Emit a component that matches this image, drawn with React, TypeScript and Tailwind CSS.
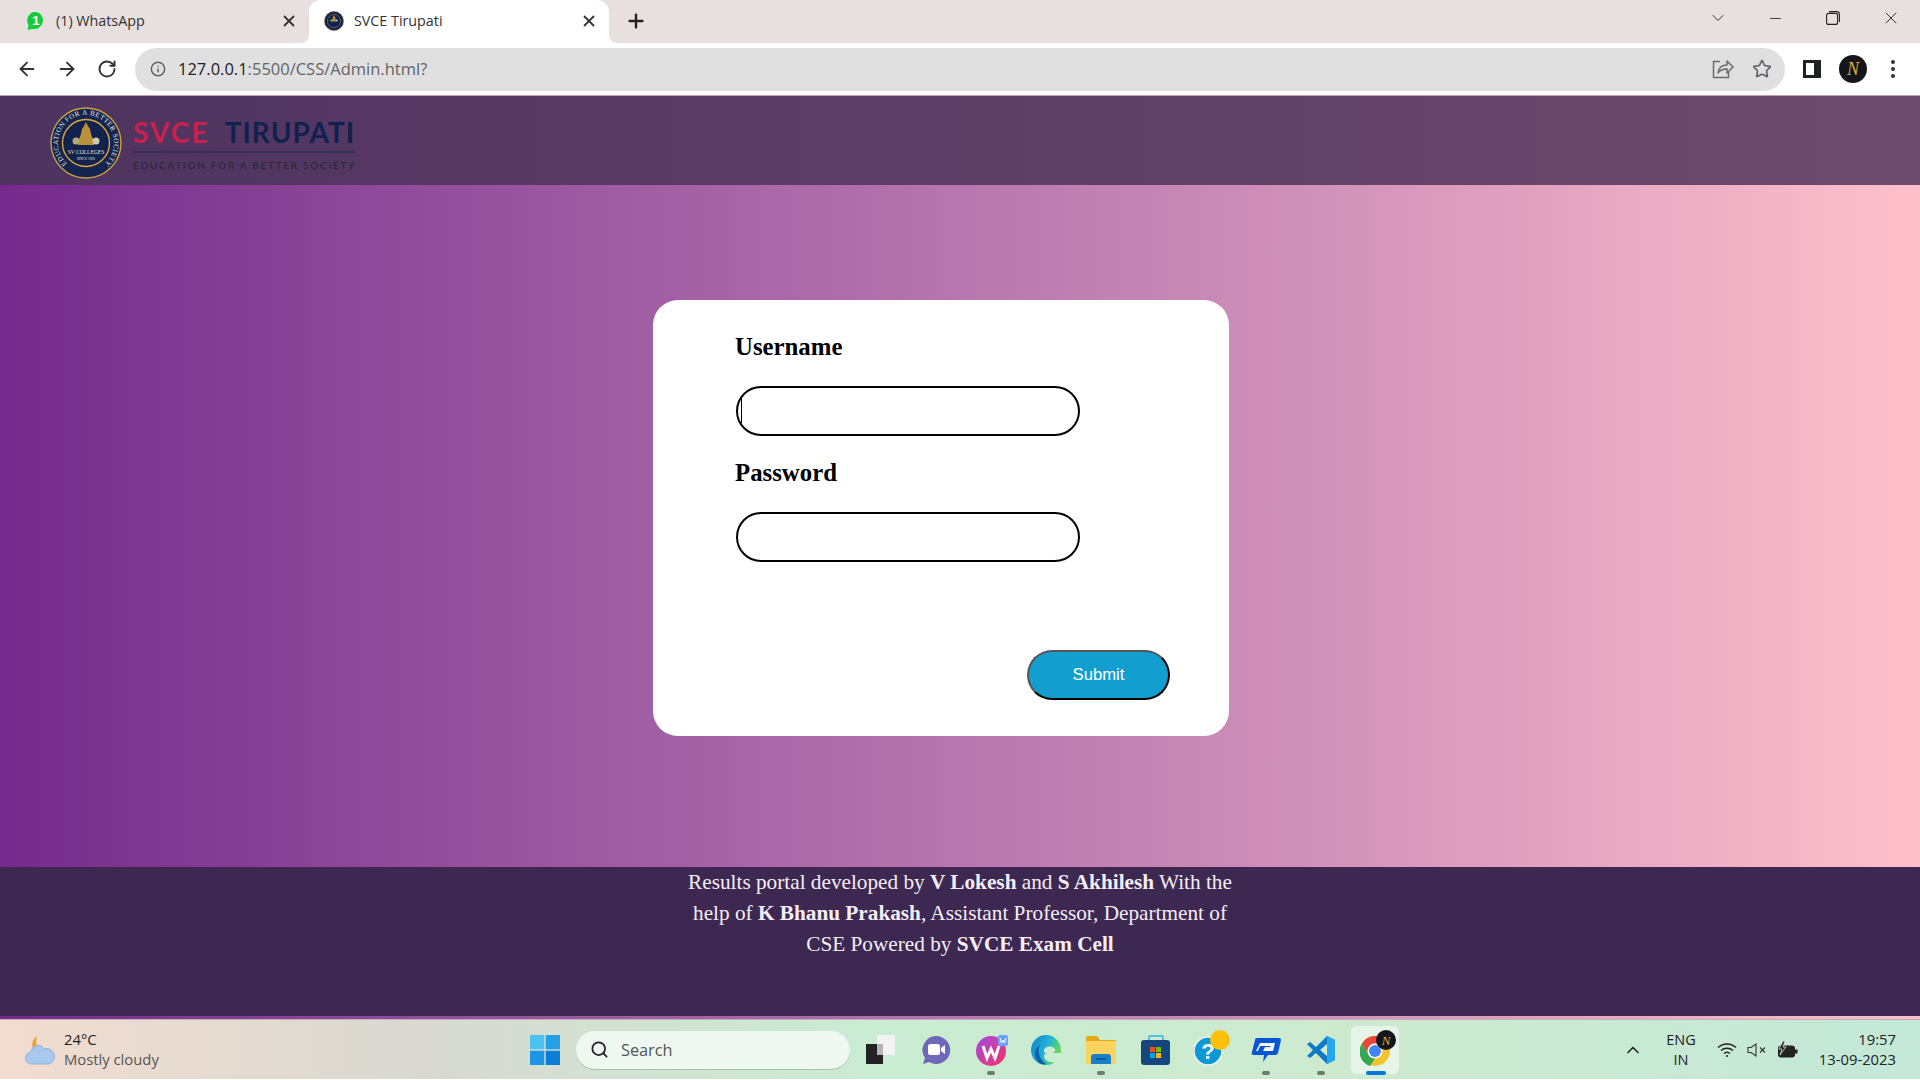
import { ArrowLeft, ArrowRight, ChevronDown, ChevronUp, Info, Minus, Plus, RotateCw, Search, Star, X } from "lucide-react";

const ui = "font-['Open_Sans',sans-serif]";

function SvceSeal({ size, plain }: { size: number; plain?: boolean }) {
  return (
    <svg width={size} height={size} viewBox="0 0 72 72">
      <defs>
        <path id="sealArc" d="M18 57.400 A28 28 0 1 1 54 57.400" />
      </defs>
      <circle cx="36" cy="36" r="35" fill="#14264f" stroke="#c9a13f" strokeWidth="1.4" />
      <circle cx="36" cy="36" r="23.5" fill="#11224d" stroke="#dba93a" strokeWidth="1.4" />
      <path d="M36 15 l2 4 2 3 1 5 2 5 1 6H28l1-6 2-5 1-5 2-3z" fill="#b8913a" />
      <circle cx="26" cy="34" r="3.5" fill="#b9a77c" />
      <circle cx="46" cy="34" r="3.5" fill="#cfc9b8" />
      {!plain && (
        <>
          <text fontSize="7" fill="#e9e7ea" fontFamily="Liberation Serif, serif" textLength="134">
            <textPath href="#sealArc" startOffset="1%">EDUCATION FOR A BETTER SOCIETY</textPath>
          </text>
          <text x="36" y="47" fontSize="5.500" textAnchor="middle" fill="#e8e4d8" fontFamily="Liberation Serif, serif">SV COLLEGES</text>
          <text x="36" y="53" fontSize="3.600" textAnchor="middle" fill="#e8e4d8" fontFamily="Liberation Serif, serif">SINCE 1981</text>
        </>
      )}
    </svg>
  );
}

function ChromeTabs() {
  return (
    <div className="flex h-[43px] items-end bg-[#e8dfdf] text-[#333]">
      <div className="flex h-[43px] w-[309px] items-center pb-[2px] pl-[26px] pr-[11px]">
        <svg width="20" height="22" viewBox="0 0 18 20">
          <path d="M9 1a8.500 8.500 0 0 0-7.300 12.800L.6 19l5-1.300A8.500 8.500 0 1 0 9 1z" fill="#18c93b" stroke="#d9efdc" />
          <text x="9" y="14" fontSize="12" fontWeight="700" textAnchor="middle" fill="#fff" fontFamily="Liberation Sans, sans-serif">1</text>
        </svg>
        <span className={`ml-[10px] text-[14.3px] ${ui}`}>(1) WhatsApp</span>
        <X className="ml-auto" size={18} strokeWidth={2.4} color="#333" />
      </div>
      <div className="relative flex h-[43px] w-[300px] items-center rounded-t-[12px] bg-white pb-[2px] pl-[15px] pr-[11px]">
        <span className="absolute bottom-0 left-[-8px] h-[8px] w-[8px] bg-white">
          <span className="block h-full w-full rounded-br-[8px] bg-[#e8dfdf]" />
        </span>
        <span className="absolute bottom-0 right-[-8px] h-[8px] w-[8px] bg-white">
          <span className="block h-full w-full rounded-bl-[8px] bg-[#e8dfdf]" />
        </span>
        <SvceSeal size={20} plain />
        <span className={`ml-[10px] text-[14.3px] ${ui}`}>SVCE Tirupati</span>
        <X className="ml-auto" size={18} strokeWidth={2.4} color="#333" />
      </div>
      <div className="flex h-[43px] flex-1 items-center pb-[2px] pl-[16px] pr-[19px]">
        <Plus size={22} strokeWidth={2.6} color="#222" />
        <ChevronDown className="ml-auto mb-[5px]" size={20} strokeWidth={1.2} color="#333" />
        <Minus className="ml-[39px] mb-[5px]" size={17} strokeWidth={1.2} color="#222" />
        <svg className="ml-[42px] mb-[5px]" width="14" height="14" viewBox="0 0 14 14" fill="none" stroke="#222" strokeWidth="1.1">
          <rect x="0.6" y="2.4" width="11" height="11" rx="2" />
          <path d="M3 .6h7.600a2.800 2.800 0 0 1 2.800 2.800V11" />
        </svg>
        <X className="ml-[41px] mb-[5px]" size={20} strokeWidth={1.1} color="#222" />
      </div>
    </div>
  );
}

function ChromeToolbar() {
  return (
    <div className="flex h-[53px] items-center border-b border-[#c9a0bb] bg-white">
      <div className="flex w-[135px] items-center pb-[1px] pl-[16px] text-[#333]">
        <ArrowLeft size={22} strokeWidth={2} />
        <ArrowRight className="ml-[18px]" size={22} strokeWidth={2} />
        <RotateCw className="ml-[19px]" size={20} strokeWidth={2.3} />
      </div>
      <div className="flex h-[43px] w-[1650px] items-center rounded-full bg-[#e0e0e0] pl-[15px] pr-[13px]">
        <Info size={16} strokeWidth={2.2} color="#5f6368" />
        <span className={`ml-[12px] text-[16.5px] text-[#626466] ${ui}`}>
          <span className="text-[#202124]">127.0.0.1</span>:5500/CSS/Admin.html?
        </span>
        <svg className="ml-auto" width="22" height="20" viewBox="0 0 22 20" fill="none" stroke="#6b6b6b" strokeWidth="1.5">
          <path d="M8 2.500H1.500v16h15V13" />
          <path d="M6 14c.5-5 4-8 9-8V2l6 6-6 6v-4c-4 0-7 1-9 4z" strokeLinejoin="round" />
        </svg>
        <Star className="ml-[18px]" size={20} strokeWidth={2} color="#5f6368" />
      </div>
      <div className="flex flex-1 items-center pl-[18px]">
        <span className="flex h-[18px] w-[18px] items-stretch bg-[#202124] py-[3px] pl-[3px] pr-[7px]">
          <span className="block w-full bg-white" />
        </span>
        <span className="ml-[18px] flex h-[28px] w-[28px] items-center justify-center rounded-full bg-[#14161a] font-['Liberation_Serif',serif] text-[18px] italic leading-none text-[#d7b13c]">
          N
        </span>
        <span className="ml-[24px] flex flex-col gap-[3px]">
          <span className="h-[4px] w-[4px] rounded-full bg-[#333]" />
          <span className="h-[4px] w-[4px] rounded-full bg-[#333]" />
          <span className="h-[4px] w-[4px] rounded-full bg-[#333]" />
        </span>
      </div>
    </div>
  );
}

function SiteHeader() {
  return (
    <header className="flex h-[89px] items-center bg-gradient-to-r from-[#4e3360] to-[#6c4b6c] pl-[50px]">
      <div className="mt-[4px] flex">
        <SvceSeal size={72} />
      </div>
      <div className="ml-[11px] mt-[6px] flex w-[222px] flex-col font-['Lato',sans-serif]">
        <div className="flex justify-between text-[28px] font-bold leading-[30px]">
          <span className="tracking-[2px] text-[#c8204f]">SVCE</span>
          <span className="tracking-[1px] text-[#10214f]">TIRUPATI</span>
        </div>
        <div className="mt-[4px] h-[2px] bg-[#33305c]" />
        <div className="mt-[6px] whitespace-nowrap text-[10px] font-bold leading-[12px] tracking-[1.7px] text-[#2f2a3a]">
          EDUCATION FOR A BETTER SOCIETY
        </div>
      </div>
    </header>
  );
}

function Field({ label, caret }: { label: string; caret?: boolean }) {
  return (
    <div className="flex flex-col">
      <label className="text-[24.8px] font-bold leading-[30px] text-black">{label}</label>
      <div className="relative ml-[1px] mt-[24px]">
        <input className="block h-[50px] w-[344px] rounded-[25px] border-2 border-black bg-white outline-none" />
        {caret && <span className="absolute left-[5px] top-[12px] h-[25px] w-[1px] bg-black" />}
      </div>
    </div>
  );
}

function LoginCard() {
  return (
    <form className="ml-[653px] flex h-[436px] w-[576px] flex-col rounded-[25px] bg-white pl-[82px] pr-[59px] pt-[32px] font-['Liberation_Serif',serif]">
      <Field label="Username" caret />
      <div className="mt-[22px]">
        <Field label="Password" />
      </div>
      <button
        type="button"
        className="mt-[88px] h-[50px] w-[143px] self-end rounded-[25px] border-2 border-t-[#555] border-l-[#555] border-r-black border-b-black bg-[#129fd0] font-['Liberation_Sans',sans-serif] text-[16.7px] text-white"
      >
        Submit
      </button>
    </form>
  );
}

function SiteFooter() {
  return (
    <footer className="flex h-[149px] justify-center bg-[#3d2852] font-['Liberation_Serif',serif] text-[21.25px] leading-[31px] text-[#f5eef5]">
      <p className="w-[560px] text-center">
        Results portal developed by <b>V Lokesh</b> and <b>S Akhilesh</b> With the help of <b>K Bhanu Prakash</b>, Assistant Professor, Department of CSE Powered by <b>SVCE Exam Cell</b>
      </p>
    </footer>
  );
}

function Slot({ children, dot, active }: { children: React.ReactNode; dot?: boolean; active?: boolean }) {
  return (
    <div className="relative flex h-[48px] w-[55px] items-center justify-center">
      {active && <span className="absolute left-[3px] top-0 h-[48px] w-[48px] rounded-[5px] bg-white/50" />}
      <span className="relative flex">{children}</span>
      {dot && <span className="absolute bottom-[-1px] left-[24px] h-[4px] w-[8px] rounded-full bg-[#6f7a6f]" />}
      {active && <span className="absolute bottom-[-1px] left-[18px] h-[4px] w-[20px] rounded-full bg-[#0078d4]" />}
    </div>
  );
}

function Taskbar() {
  return (
    <div className={`flex h-[60px] items-center border-t border-[#b9b3b3] bg-[linear-gradient(to_right,#f2dccf_0%,#d9d9d2_22%,#c9ecd2_45%,#cdeacf_70%,#c3e8d8_100%)] ${ui}`}>
      <div className="flex w-[530px] items-center pl-[25px]">
        <svg width="30" height="30" viewBox="0 0 30 30">
          <path d="M12 1c-4 3-6 7-4 13l9 1C12 13 10 8 12 1z" fill="#f0a030" />
          <path d="M7 29a6 6 0 0 1-1-12 7 7 0 0 1 13-3 6.500 6.500 0 0 1 5 15z" fill="#a9c8ee" stroke="#8fb2e0" />
        </svg>
        <div className="mb-[2px] ml-[9px] flex flex-col text-[14.8px] leading-[20px]">
          <span className="text-[#222]">24°C</span>
          <span className="text-[#555]">Mostly cloudy</span>
        </div>
      </div>
      <svg width="30" height="30" viewBox="0 0 30 30">
        <path d="M0 0h14.300v14.300H0z" fill="#4cc2f1" />
        <path d="M15.700 0H30v14.300H15.700z" fill="#22a0e8" />
        <path d="M0 15.700h14.300V30H0z" fill="#1c96e5" />
        <path d="M15.700 15.700H30V30H15.700z" fill="#0a7fd9" />
      </svg>
      <div className="ml-[16px] flex h-[38px] w-[274px] items-center rounded-full bg-[#eef7f0] pl-[14px] shadow-[0_1px_0_#aac0ae]">
        <Search size={19} strokeWidth={2.2} color="#222" />
        <span className="ml-[12px] mt-[1px] text-[16.3px] text-[#555]">Search</span>
      </div>
      <div className="ml-[3px] flex items-center">
        <Slot>
          <svg width="30" height="30" viewBox="0 0 30 30">
            <rect x="11" y="0" width="18" height="20" fill="#f3f3f3" />
            <rect x="0" y="9" width="17" height="20" fill="#222" />
            <rect x="11" y="9" width="6" height="11" fill="#b5b5b5" />
          </svg>
        </Slot>
        <Slot>
          <svg width="30" height="30" viewBox="0 0 30 30">
            <path d="M15 1a14 14 0 1 1-7 26l-6 2 2-6A14 14 0 0 1 15 1z" fill="#6d68b8" />
            <rect x="7" y="9" width="12" height="11" rx="2.500" fill="#fff" />
            <path d="M20 13l4-3v9l-4-3z" fill="#fff" />
          </svg>
        </Slot>
        <Slot dot>
          <svg className="ml-[2px]" width="32" height="32" viewBox="0 0 32 32">
            <defs>
              <linearGradient id="wpsGrad" x1="0" y1="0" x2="1" y2="1">
                <stop offset="0" stopColor="#a24be0" />
                <stop offset="1" stopColor="#f5306a" />
              </linearGradient>
            </defs>
            <circle cx="15" cy="17" r="15" fill="url(#wpsGrad)" />
            <path d="M7 12l4 12 4-9 4 9 4-12" fill="none" stroke="#fff" strokeWidth="3" />
            <rect x="22" y="1" width="10" height="11" rx="2" fill="#6ba4f4" />
            <path d="M24 4l1.500 5 1.500-3 1.500 3L30 4" fill="none" stroke="#fff" strokeWidth="1" />
          </svg>
        </Slot>
        <Slot>
          <svg width="30" height="30" viewBox="0 0 30 30">
            <defs>
              <linearGradient id="edgeGrad" x1="0" y1="0" x2="1" y2="0.400">
                <stop offset="0" stopColor="#0c7fcb" />
                <stop offset="0.600" stopColor="#25b4d8" />
                <stop offset="1" stopColor="#68d85a" />
              </linearGradient>
            </defs>
            <path d="M0 15a15 15 0 0 1 30 0v3H17c-2 0-4 1-4 3 0 4 5 7 11 6a15 15 0 0 1-24-12z" fill="url(#edgeGrad)" />
            <path d="M8 28c-5-6-6-14 1-18-3 6-1 14 6 19-2 1-5 0-7-1z" fill="#0b5fa5" />
            <path d="M13 15c1-4 8-5 11-1 1 2-1 4-4 4h-5c-2 0-2-1-2-3z" fill="#cdeacf" />
          </svg>
        </Slot>
        <Slot dot>
          <svg width="30" height="28" viewBox="0 0 30 28">
            <path d="M0 2a2 2 0 0 1 2-2h9l3 4h16v24H0z" fill="#e3aa16" />
            <path d="M0 5h30v23H0z" fill="#fbd35f" />
            <path d="M5 21a3 3 0 0 1 3-3h14a3 3 0 0 1 3 3v7H5z" fill="#1a80c8" />
            <path d="M10 23h10" stroke="#0d4f8c" strokeWidth="1.500" />
          </svg>
        </Slot>
        <Slot>
          <svg width="30" height="30" viewBox="0 0 30 30">
            <path d="M8 5V2a1 1 0 0 1 1-1h12a1 1 0 0 1 1 1v3" fill="none" stroke="#2bb5e8" strokeWidth="1.500" />
            <rect x="0" y="5" width="29" height="25" rx="3" fill="#16467e" />
            <rect x="9" y="12" width="5" height="5" fill="#f25022" />
            <rect x="15" y="12" width="5" height="5" fill="#7fba00" />
            <rect x="9" y="18" width="5" height="5" fill="#00a4ef" />
            <rect x="15" y="18" width="5" height="5" fill="#ffb900" />
          </svg>
        </Slot>
        <Slot>
          <svg className="mb-[4px] ml-[2px]" width="36" height="36" viewBox="0 0 36 36">
            <circle cx="14" cy="21" r="14" fill="#0c97d5" stroke="#e8f5ee" strokeWidth="1.500" />
            <text x="14" y="29" textAnchor="middle" fontSize="22" fontWeight="700" fill="#fff" fontFamily="Liberation Sans, sans-serif">?</text>
            <circle cx="26" cy="10" r="10" fill="#fec10d" />
          </svg>
        </Slot>
        <Slot dot>
          <svg width="30" height="26" viewBox="0 0 30 26">
            <path d="M6 1h22a2 2 0 0 1 2 2l-3 13a3 3 0 0 1-3 2h-7l-5 7 1-7H3a2 2 0 0 1-2-3L4 3a2 2 0 0 1 2-2z" fill="#0a55d5" />
            <path d="M9 6h15l-2 8H12l2-4h5l.500-1H9l-2 5H5z" fill="#f0f7ef" />
          </svg>
        </Slot>
        <Slot dot>
          <svg width="30" height="30" viewBox="0 0 30 30">
            <path d="M21 1l8 4v20l-8 4-11-11-6 5-3-2 6-6-6-6 3-2 6 5z" fill="#0e7bc8" />
            <path d="M21 1l8 4v20l-8 4z" fill="#28a7ee" />
            <path d="M21 9l-7 6 7 6z" fill="#d2ecd4" />
          </svg>
        </Slot>
        <Slot active>
          <svg className="mb-[4px] ml-[4px]" width="36" height="36" viewBox="0 0 36 36">
            <circle cx="15" cy="21" r="15" fill="#f4c430" />
            <path d="M15 6a15 15 0 0 1 13 7.500H15a7.500 7.500 0 0 0-6.500 11.200L2 13.500A15 15 0 0 1 15 6z" fill="#e8453c" />
            <path d="M2 13.500l6.500 11.200a7.500 7.500 0 0 0 6.500 3.800L10 36A15 15 0 0 1 2 13.500z" fill="#34a853" />
            <circle cx="15" cy="21" r="7.500" fill="#fff" />
            <circle cx="15" cy="21" r="6" fill="#4285f4" />
            <circle cx="26" cy="10" r="10" fill="#14161a" />
            <text x="26" y="15" fontSize="13" fontStyle="italic" textAnchor="middle" fill="#d7b13c" fontFamily="Liberation Serif, serif">N</text>
          </svg>
        </Slot>
      </div>
      <div className="flex flex-1 items-center pl-[220px] text-[14px] leading-[20px] text-[#222]">
        <ChevronUp size={20} strokeWidth={2} />
        <div className="ml-[21px] flex w-[34px] flex-col items-center text-[14.5px]">
          <span>ENG</span>
          <span>IN</span>
        </div>
        <svg className="ml-[19px]" width="20" height="16" viewBox="0 0 20 16" fill="none" stroke="#222" strokeWidth="1.500">
          <path d="M1 5.500a13 13 0 0 1 18 0M4 8.500a9 9 0 0 1 12 0M7 11.500a4.500 4.500 0 0 1 6 0" />
          <circle cx="10" cy="14" r="1" fill="#222" stroke="none" />
        </svg>
        <svg className="ml-[10px]" width="20" height="14" viewBox="0 0 20 14" fill="none" stroke="#333" strokeWidth="1.100">
          <path d="M1 4.500h3L9 1v12L4 9.500H1z" />
          <path d="M13 4.500l5 5M18 4.500l-5 5" />
        </svg>
        <svg className="ml-[10px]" width="21" height="18" viewBox="0 0 21 18">
          <rect x="1.500" y="5" width="16" height="11" rx="2" fill="#222" stroke="#222" />
          <rect x="18" y="8.500" width="2.500" height="4" fill="#222" />
          <path d="M6 0L2 8h3l-2 6 6-8H6l2-6z" fill="#222" stroke="#d0ead2" strokeWidth="0.800" />
        </svg>
        <div className="ml-auto mb-[1px] flex flex-col items-end pr-[24px] text-[14.8px]">
          <span>19:57</span>
          <span>13-09-2023</span>
        </div>
      </div>
    </div>
  );
}

export default function App() {
  return (
    <div className="flex h-screen w-full flex-col overflow-hidden">
      <ChromeTabs />
      <ChromeToolbar />
      <div className="flex h-[923px] flex-col bg-gradient-to-r from-[#742a8c] to-[#ffc0cb]">
        <SiteHeader />
        <main className="h-[682px] pt-[115px]">
          <LoginCard />
        </main>
        <SiteFooter />
        <div className="flex-1" />
      </div>
      <Taskbar />
    </div>
  );
}
